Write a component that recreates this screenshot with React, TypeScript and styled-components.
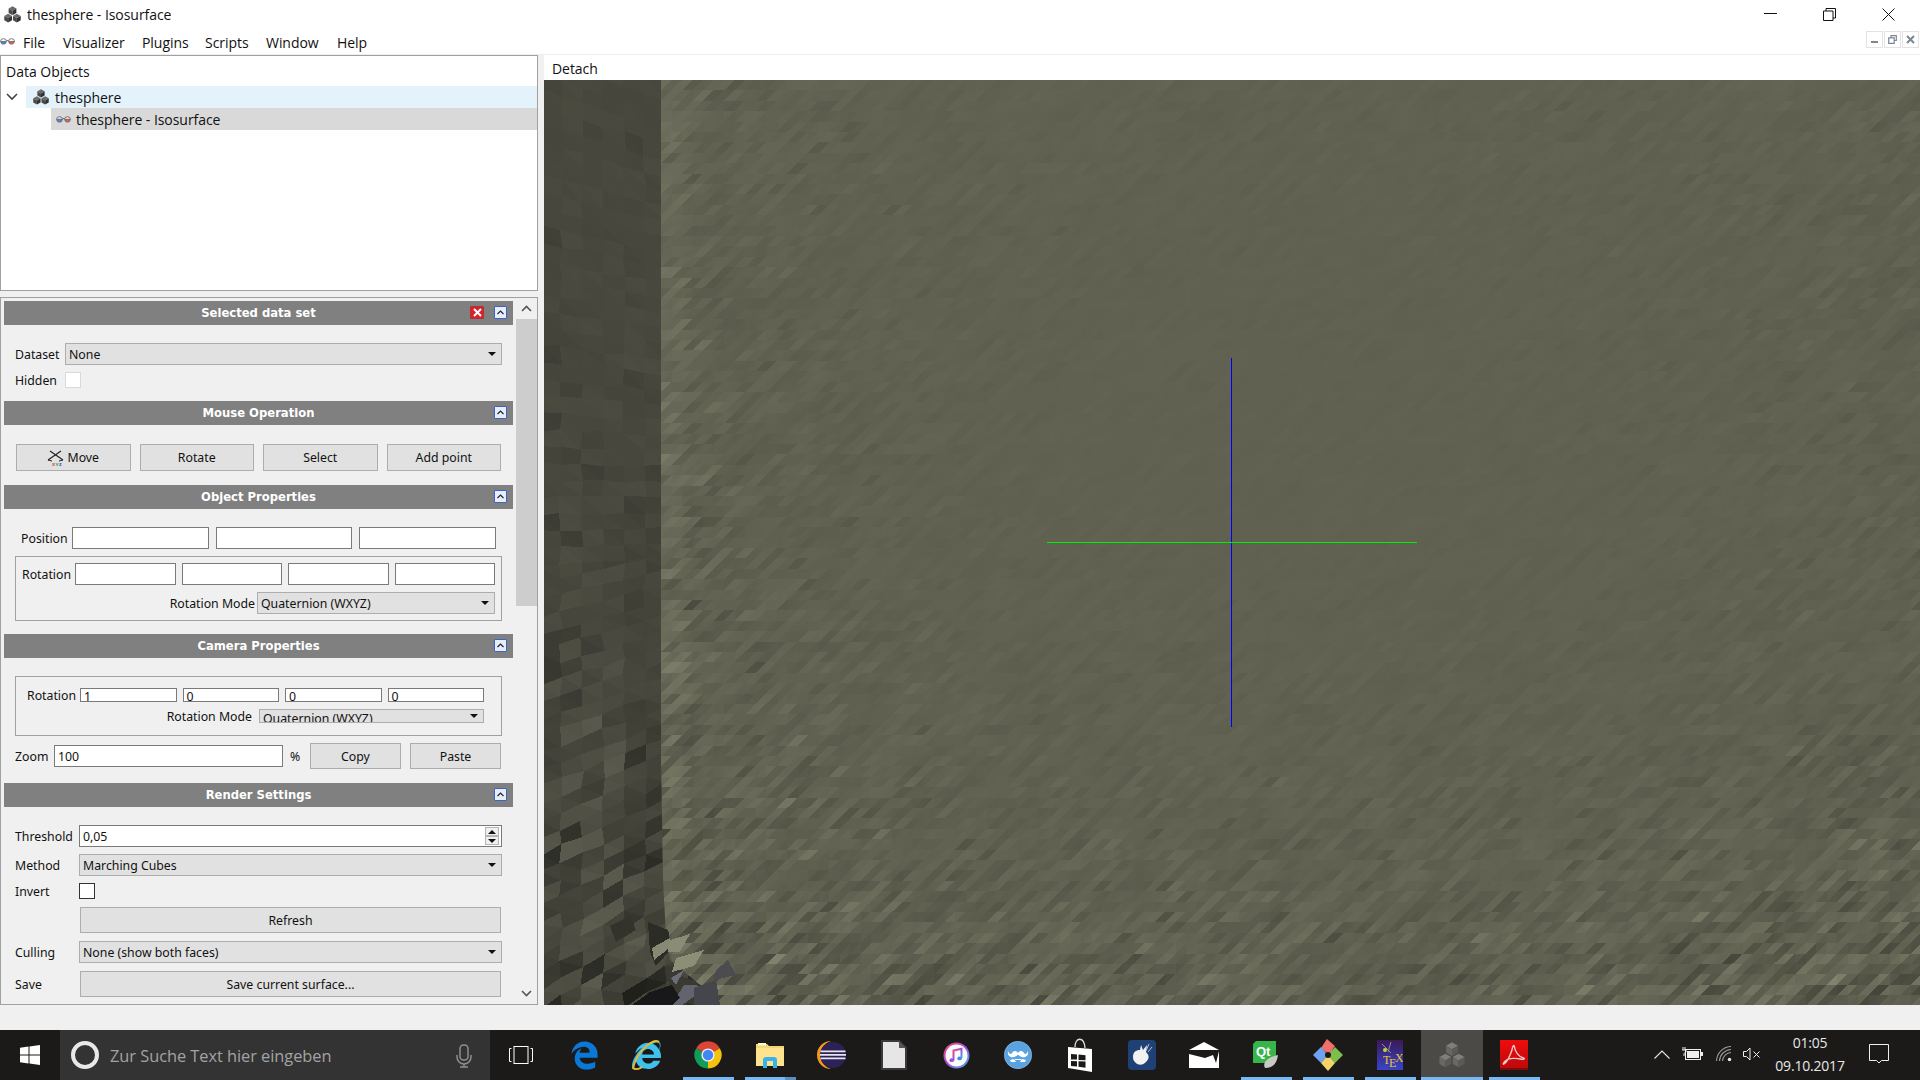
import React, { useMemo } from "react";
import styled, { createGlobalStyle } from "styled-components";
import { FaInternetExplorer } from "react-icons/fa";
import { FaEdgeLegacy } from "react-icons/fa6";

const ui = `"Open Sans", "Noto Sans", sans-serif`;
const dlg = `"Noto Sans", "Liberation Sans", sans-serif`;

const Global = createGlobalStyle`
  html, body { margin: 0; padding: 0; width: 1920px; height: 1080px; overflow: hidden; background: #f0f0f0; }
  * { box-sizing: border-box; }
`;

const Page = styled.div`
  width: 1920px; height: 1080px; display: flex; flex-direction: column; background: #f0f0f0; overflow: hidden;
`;
const TitleBar = styled.header`
  height: 28px; flex: none; background: #fff; display: flex; align-items: center; padding-left: 4px;
`;
const TitleText = styled.span`
  font: 14px ${ui}; color: #111; margin-left: 6px; letter-spacing: -0.05px;
`;
const WindowControls = styled.div`
  margin-left: auto; display: flex; align-items: center; height: 28px; padding-right: 2px;
`;
const WindowControl = styled.div`
  width: 59px; display: flex; justify-content: center; align-items: center;
`;
const MenuBar = styled.nav`
  height: 27px; flex: none; background: #fff; display: flex; align-items: center; border-bottom: 1px solid #eee;
`;
const MenuItem = styled.span<{ $w: number }>`
  font: 14px ${ui}; color: #111; width: ${(p) => p.$w}px; letter-spacing: -0.05px; padding-top: 3px;
`;
const MenuIcon = styled.div`
  width: 23px; padding-top: 1px; display: flex;
`;
const MdiButtons = styled.div`
  margin-left: auto; display: flex; gap: 1px; padding-right: 1px; padding-bottom: 3px;
`;
const MdiButton = styled.div`
  width: 17px; height: 17px; border: 1px solid #e3e3e3; background: #fff; display: flex; align-items: center; justify-content: center;
`;
const Body = styled.main`
  flex: 1; min-height: 0; display: flex; gap: 6px; align-items: flex-start;
`;
const LeftColumn = styled.div`
  width: 538px; flex: none; display: flex; flex-direction: column; gap: 6px;
`;
const TreePanel = styled.section`
  height: 236px; background: #fff; border: 1px solid #a0a0a0; display: flex; flex-direction: column;
`;
const TreeHeader = styled.div`
  height: 30px; flex: none; font: 14px ${ui}; color: #111; padding: 6px 0 0 5px; letter-spacing: 0;
`;
const TreeRow = styled.div<{ $indent: number; $bg: string }>`
  height: 22px; flex: none; display: flex; align-items: center; margin-left: ${(p) => p.$indent}px; background: ${(p) => p.$bg};
  font: 14px ${ui}; color: #111; letter-spacing: -0.05px; position: relative;
`;
const TreeChevron = styled.svg`
  position: absolute; left: -20px; top: 7px;
`;
const TreeIcon = styled.div<{ $w: number }>`
  width: ${(p) => p.$w}px; display: flex; justify-content: center; flex: none;
`;
const ControlPanel = styled.section`
  height: 708px; border: 1px solid #a0a0a0; display: flex; overflow: hidden;
`;
const PanelContent = styled.div`
  width: 515px; flex: none; padding: 3px 3px 0;
`;
const Scrollbar = styled.div`
  flex: 1; display: flex; flex-direction: column; background: #f0f0f0;
`;
const ScrollArrow = styled.div`
  height: 21px; flex: none; display: flex; align-items: center; justify-content: center;
`;
const ScrollThumb = styled.div`
  height: 287px; flex: none; background: #cdcdcd;
`;
const ScrollSpacer = styled.div`
  flex: 1;
`;
const SectionHead = styled.div`
  height: 24px; background: #808080; position: relative; display: flex; align-items: center; justify-content: center;
  font: bold 11.6px "DejaVu Sans", ${dlg}; color: #fff;
`;
const HeadButtons = styled.div`
  position: absolute; right: 6px; top: 5px; display: flex; gap: 10px;
`;
const SmallBtn = styled.div<{ $tone: "blue" | "red" }>`
  width: ${(p) => (p.$tone === "red" ? 14 : 13)}px; height: 13px; display: flex; align-items: center; justify-content: center;
  background: ${(p) => (p.$tone === "red" ? "#d8232c" : "#e6edfb")};
  border: 1px solid ${(p) => (p.$tone === "red" ? "#a33" : "#3b62c4")};
  border-radius: 1px;
`;
const SectionBody = styled.div<{ $pt?: number; $pb?: number }>`
  padding: ${(p) => p.$pt ?? 18}px 11px ${(p) => p.$pb ?? 13}px;
  display: flex; flex-direction: column; gap: 7px;
  font: 12.3px/14px ${dlg}; color: #111;
`;
const Label = styled.span`
  position: relative; top: 1px;
`;
const LabelRow = styled.div<{ $label: number }>`
  display: grid; grid-template-columns: ${(p) => p.$label}px 1fr; align-items: center;
`;
const Fields = styled.div<{ $n: number; $gap: number }>`
  display: grid; grid-template-columns: repeat(${(p) => p.$n}, 1fr); column-gap: ${(p) => p.$gap}px;
`;
const Field = styled.div<{ $small?: boolean }>`
  height: ${(p) => (p.$small ? 14 : 22)}px; border: 1px solid #7a7a7a; background: #fff; padding: ${(p) => (p.$small ? 1 : 0)}px 3px 0;
  line-height: ${(p) => (p.$small ? 13 : 21)}px; white-space: nowrap; overflow: hidden; display: flex; align-items: flex-start; position: relative;
`;
const Spin = styled.div`
  position: absolute; right: 2px; top: 1px; width: 14px; height: 18px; display: flex; flex-direction: column;
`;
const SpinPart = styled.div`
  flex: 1; border: 1px solid #b5b5b5; background: #f0f0f0; display: flex; align-items: center; justify-content: center;
`;
const ComboBox = styled.div<{ $small?: boolean }>`
  height: ${(p) => (p.$small ? 14 : 22)}px; border: 1px solid #adadad; background: #e1e1e1; padding: 0 3px;
  line-height: ${(p) => (p.$small ? 17 : 21)}px;
  display: flex; align-items: flex-start; overflow: hidden; position: relative; white-space: nowrap;
`;
const ComboArrow = styled.div<{ $small?: boolean }>`
  position: absolute; right: 5px; top: ${(p) => (p.$small ? 4 : 8)}px; width: 0; height: 0;
  border-left: 4px solid transparent; border-right: 4px solid transparent; border-top: 4px solid #111;
`;
const Check = styled.div<{ $border: string }>`
  width: 16px; height: 16px; background: #fff; border: 1px solid ${(p) => p.$border};
`;
const Button = styled.div<{ $h?: number; $inset?: boolean }>`
  height: ${(p) => p.$h ?? 27}px; border: 1px solid #adadad; background: #e1e1e1; display: flex; align-items: center; justify-content: center; gap: 3px;
  padding-top: 1px;
  ${(p) => (p.$inset ? "margin: 1px 1px;" : "")}
`;
const ButtonRow = styled.div`
  display: grid; grid-template-columns: repeat(4, 1fr); column-gap: 9px; padding: 0 1px;
`;
const PositionRow = styled.div`
  display: grid; grid-template-columns: 51px 1fr; align-items: center; padding: 0 6px;
`;
const GroupBox = styled.div<{ $pad: string; $gap: number }>`
  border: 1px solid #a0a0a0; padding: ${(p) => p.$pad}; display: flex; flex-direction: column; gap: ${(p) => p.$gap}px;
`;
const ModeRow = styled.div<{ $combo: number }>`
  display: flex; justify-content: flex-end; align-items: center; gap: 2px;
  & > :last-child { width: ${(p) => p.$combo}px; }
`;
const ModeLabel = styled(Label)<{ $mr?: number }>`
  margin-right: ${(p) => p.$mr ?? 0}px;
`;
const ZoomRow = styled.div`
  display: flex; align-items: center; padding-right: 1px;
`;
const ZoomLabel = styled(Label)`
  width: 39px; flex: none;
`;
const ZoomField = styled(Field)`
  width: 229px; flex: none;
`;
const Percent = styled(Label)`
  width: 27px; padding-left: 7px; flex: none;
`;
const ZoomButton = styled(Button)`
  width: 91px; flex: none; margin-right: 9px; &:last-child { margin-right: 0; }
`;
const Right = styled.div`
  flex: 1; min-width: 0; height: 950px; display: flex; flex-direction: column; background: #fff;
`;
const DetachBar = styled.div`
  height: 25px; flex: none; background: #fff; font: 14px ${ui}; color: #111; padding: 4px 0 0 8px; letter-spacing: -0.05px;
`;
const ViewSvg = styled.svg`
  display: block; width: 1376px; height: 925px; background: #5f6050;
`;
const Taskbar = styled.footer`
  position: fixed; left: 0; right: 0; bottom: 0; height: 50px; background: #1c1a18; display: flex; align-items: stretch;
`;
const StartButton = styled.div`
  width: 60px; flex: none; display: flex; align-items: center; justify-content: center;
`;
const SearchBox = styled.div`
  width: 430px; flex: none; background: #333; display: flex; align-items: center; padding-left: 11px; position: relative;
`;
const CortanaRing = styled.div`
  width: 28px; height: 28px; border-radius: 50%; border: 4px solid #e8e8e8; flex: none; margin-right: 11px;
`;
const SearchText = styled.span`
  font: 16.4px ${ui}; color: #a3a3a3; letter-spacing: -0.05px;
`;
const MicIcon = styled.div`
  position: absolute; left: 396px; top: 14px;
`;
const TaskViewButton = styled.div`
  width: 63px; flex: none; display: flex; align-items: center; justify-content: center; padding-right: 2px;
`;
const TaskItem = styled.div<{ $on?: boolean; $active?: boolean; $split?: boolean }>`
  width: 62px; flex: none; display: flex; align-items: center; justify-content: center; position: relative;
  background: ${(p) => (p.$active ? "#4c4a47" : "transparent")};
  &::after {
    content: ""; display: ${(p) => (p.$on ? "block" : "none")}; position: absolute; bottom: 0; height: 3px;
    background: ${(p) => (p.$split ? "linear-gradient(90deg, #76b9f8 0 40px, #5a8fc4 40px)" : "#76b9f8")};
    left: ${(p) => (p.$active ? 0 : 6)}px; right: ${(p) => (p.$active ? 0 : 5)}px;
  }
`;
const IeOrbit = styled.svg`
  position: absolute; left: 15px; top: 9px;
`;
const Tray = styled.div`
  margin-left: auto; display: flex; align-items: stretch; padding-right: 17px;
`;
const TrayItem = styled.div<{ $w: number }>`
  width: ${(p) => p.$w}px; flex: none; display: flex; align-items: center; justify-content: center; padding-bottom: 2px;
`;
const Clock = styled.div`
  width: 90px; flex: none; display: flex; flex-direction: column; align-items: center; justify-content: center; gap: 4px;
  font: 14px/19px ${ui}; color: #e8e8e8; letter-spacing: -0.2px; padding-bottom: 2px;
`;

/* ---------- 3D surface mesh ---------- */
function mulberry(a: number) {
  return () => {
    a |= 0; a = (a + 0x6d2b79f5) | 0;
    let t = Math.imul(a ^ (a >>> 15), 1 | a);
    t = (t + Math.imul(t ^ (t >>> 7), 61 | t)) ^ t;
    return ((t ^ (t >>> 14)) >>> 0) / 4294967296;
  };
}
function hash(i: number, j: number) {
  const x = Math.sin(i * 127.1 + j * 311.7) * 43758.5453;
  return x - Math.floor(x);
}
type Buckets = Map<string, string[]>;
function put(b: Buckets, l: number, base: number[], d: string) {
  const q = Math.round(Math.max(0.25, Math.min(1.5, l)) * 96) / 96;
  const key = `rgb(${Math.round(base[0] * q)},${Math.round(base[1] * q)},${Math.round(base[2] * q)})`;
  if (!b.has(key)) b.set(key, []);
  b.get(key)!.push(d);
}
function tri(a: number[], c: number[], e: number[]) {
  return `M${a[0].toFixed(1)} ${a[1].toFixed(1)}L${c[0].toFixed(1)} ${c[1].toFixed(1)}L${e[0].toFixed(1)} ${e[1].toFixed(1)}Z`;
}
function buildRight() {
  const r = mulberry(7);
  const b: Buckets = new Map();
  const base = [96, 97, 81];
  const w = 10.5, h = 10.4;
  for (let j = 0; j < 90; j++) {
    for (let i = 0; i < 132; i++) {
      const x = 117 + (i - 2) * w, y = j * h;
      const dx = (x - 700) / 640, dy = (y - 380) / 545;
      let c = 0.006 + 0.03 * (dx * dx * 0.7 + dy * dy * (dy > 0 ? 2.3 : 0.5));
      c += 0.035 * Math.exp(-(x - 117) / 140) * (0.7 + (y / 925) * 1.6);
      c += 0.09 * Math.exp(-(1376 - x) / 150) * Math.max(0, (y - 620) / 300);
      c += 0.07 * Math.max(0, (y - 800) / 125) * Math.exp(-x / 900);
      const diag = hash(Math.floor(j / 3), i + j) * 2 - 1;
      let n = (r() * 2 - 1) * 0.8 + diag * 0.9;
      if (r() < 0.07) n -= 1.4;
      if (r() < 0.05) n += 1.2;
      const inStrip = x < 128 ? 0.08 : 0;
      const l = 1 + c * n + inStrip;
      const a = [x, y + h], m = [x + w, y], e = [x + 2 * w, y], f = [x + w, y + h];
      put(b, l + (r() - 0.5) * c * 0.5, base, tri(a, m, f));
      put(b, l + (r() - 0.5) * c * 0.5, base, tri(m, e, f));
    }
  }
  return b;
}
function buildLeft() {
  const r = mulberry(23);
  const b: Buckets = new Map();
  const base = [72, 72, 62];
  const w = 21, h = 17;
  const vert = (i: number, j: number) => {
    const y0 = j * h;
    const s = 8 - (y0 / 925) * 16 - (y0 > 560 ? 3 : 0);
    return [i * w - 6 + hash(j, i) * 4, y0 + s * i + hash(i, j) * 4 - 60];
  };
  for (let j = 0; j < 64; j++) {
    for (let i = 0; i < 8; i++) {
      const p = vert(i, j), q = vert(i + 1, j), s = vert(i + 1, j + 1), t = vert(i, j + 1);
      const yy = p[1] / 925;
      const c = 0.03 + Math.pow(Math.max(0, yy), 2.4) * 0.13;
      let n = r() * 2 - 1;
      if (r() < 0.13) n -= 2;
      if (yy > 0.6 && r() < 0.18) n += 1.6;
      const edge = i >= 4 && yy > 0.45 ? -0.07 : 0;
      const l = 1 + c * n + edge - (i < 1 ? 0.02 : 0);
      put(b, l, base, tri(p, q, s));
      put(b, l + (r() - 0.6) * c * 1.2, base, tri(p, s, t));
    }
  }
  return b;
}
function Mesh({ data }: { data: Buckets }) {
  return (
    <g shapeRendering="crispEdges">
      {Array.from(data.entries()).map(([fill, ds]) => (
        <path key={fill} fill={fill} d={ds.join("")} />
      ))}
    </g>
  );
}
function Surface() {
  const right = useMemo(buildRight, []);
  const left = useMemo(buildLeft, []);
  return (
    <ViewSvg viewBox="0 0 1376 925">
      <Mesh data={right} />
      <clipPath id="wall">
        <path d="M0 0H117L117 680L119 800L122 857L126 880L156 905L176 925H0Z" />
      </clipPath>
      <g clipPath="url(#wall)">
        <Mesh data={left} />
      </g>
      <g shapeRendering="crispEdges">
        <polygon fill="#2c2c26" points="104,842 124,850 128,868 112,886 106,872" />
        <polygon fill="#878972" points="108,868 126,858 128,866 110,880" />
        <polygon fill="#33332c" points="66,846 86,836 92,850 72,862" />
        <polygon fill="#8a8c75" points="126,860 146,854 136,872 124,872" />
        <polygon fill="#3a3a33" points="122,890 148,900 170,912 150,925 128,918" />
        <polygon fill="#6c6d78" points="127,898 140,890 132,905" />
        <polygon fill="#62636c" points="140,905 165,906 138,925 128,925" />
        <polygon fill="#45454c" points="150,908 172,900 176,925 150,925" />
        <polygon fill="#4c4c50" points="172,890 184,880 192,895 170,900" />
        <polygon fill="#18181a" points="88,925 106,912 128,905 136,918 128,925" />
        <polygon fill="#8c8e76" points="132,878 160,870 150,886 128,892" />
      </g>
      <g shapeRendering="crispEdges">
        <rect x="687" y="278" width="1" height="369" fill="#0000ff" />
        <rect x="503" y="462" width="370" height="1" fill="#00f000" />
      </g>
    </ViewSvg>
  );
}

/* ---------- Small icons ---------- */
function Cube({ x, y, s, a, b, c }: { x: number; y: number; s: number; a: string; b: string; c: string }) {
  const h = s * 0.87;
  return (
    <g>
      <polygon fill={a} points={`${x},${y - s} ${x + h},${y - s / 2} ${x},${y} ${x - h},${y - s / 2}`} />
      <polygon fill={b} points={`${x - h},${y - s / 2} ${x},${y} ${x},${y + s} ${x - h},${y + s / 2}`} />
      <polygon fill={c} points={`${x + h},${y - s / 2} ${x},${y} ${x},${y + s} ${x + h},${y + s / 2}`} />
    </g>
  );
}
function Cubes({ size, a = "#6b6b6b", b = "#4a4a4a", c = "#333" }: { size: number; a?: string; b?: string; c?: string }) {
  return (
    <svg width={size} height={size} viewBox="0 0 16 16">
      <Cube x={8} y={4.4} s={4.2} a={a} b={b} c={c} />
      <Cube x={3.9} y={11.4} s={4.2} a={a} b={b} c={c} />
      <Cube x={12.1} y={11.4} s={4.2} a={a} b={b} c={c} />
    </svg>
  );
}
function Glasses({ w = 15 }: { w?: number }) {
  return (
    <svg width={w} height={w * 0.55} viewBox="0 0 15 8">
      <path d="M.5 4.500a3 3 0 0 1 6 0zM8.500 4.500a3 3 0 0 1 6 0z" fill="none" stroke="#777" strokeWidth="1" />
      <path d="M.7 4.500a2.800 2.600 0 0 0 5.600 0z" fill="#4f86cc" stroke="#667" strokeWidth=".5" />
      <path d="M8.700 4.500a2.800 2.600 0 0 0 5.600 0z" fill="#d26464" stroke="#766" strokeWidth=".5" />
      <path d="M6.500 3.500h2" stroke="#666" strokeWidth="1" />
    </svg>
  );
}
const Chev = ({ up = true, color = "#555" }: { up?: boolean; color?: string }) => (
  <svg width="11" height="7" viewBox="0 0 11 7">
    <path d={up ? "M1 6L5.5 1.5L10 6" : "M1 1L5.5 5.5L10 1"} fill="none" stroke={color} strokeWidth="1.6" />
  </svg>
);
const MoveIcon = () => (
  <svg width="17" height="16" viewBox="0 0 17 16">
    <path d="M1 10L14 1M3 1L16 10" stroke="#222" strokeWidth="1.2" fill="none" />
    <path d="M1 10l4 1M16 10l-4 1" stroke="#222" strokeWidth="1" />
    <text x="5" y="15.5" fontSize="5.5" fontFamily="Liberation Sans" fontWeight="bold" fill="#d44">x</text>
    <text x="8.5" y="15.5" fontSize="5.5" fontFamily="Liberation Sans" fontWeight="bold" fill="#3a3">y</text>
    <text x="12" y="15.5" fontSize="5.5" fontFamily="Liberation Sans" fontWeight="bold" fill="#44d">z</text>
  </svg>
);
const Chrome = () => (
  <svg width="28" height="28" viewBox="0 0 28 28">
    <path d="M14 14L2.2 7.2A13.6 13.6 0 0 1 25.8 7.2z" fill="#db4437" />
    <path d="M14 14L25.8 7.2A13.6 13.6 0 0 1 14 27.6z" fill="#f4c20d" />
    <path d="M14 14L14 27.6A13.6 13.6 0 0 1 2.2 7.2z" fill="#0f9d58" />
    <circle cx="14" cy="14" r="6.6" fill="#eee" />
    <circle cx="14" cy="14" r="5.2" fill="#4285f4" />
  </svg>
);
const Folder = () => (
  <svg width="28" height="26" viewBox="0 0 28 26">
    <path d="M0 2h11l2 2h15v20H0z" fill="#f3d774" />
    <rect x="0" y="6" width="28" height="18" fill="#fde38e" />
    <rect x="2" y="1" width="8" height="2.5" fill="#fff6c9" />
    <path d="M7 24v-6q0-3 3-3h8q3 0 3 3v6h-4v-5h-6v5z" fill="#38b2e8" />
    <rect x="7" y="23" width="4" height="3" fill="#38b2e8" />
    <rect x="17" y="23" width="4" height="3" fill="#38b2e8" />
  </svg>
);
const Eclipse = () => (
  <svg width="30" height="28" viewBox="0 0 30 28">
    <path d="M14 0a14 14 0 0 0 0 28a14.5 14.5 0 0 1 0-28z" fill="#f39a1e" />
    <circle cx="16" cy="14" r="13" fill="#2c2255" />
    <path d="M3.5 9.5h25v1.8h-25zM3 13h26v1.8H3zM3.5 16.5h25v1.8h-25z" fill="#e8e6f2" />
  </svg>
);
const LibreDoc = () => (
  <svg width="26" height="30" viewBox="0 0 26 30">
    <path d="M1 1h17l7 7v21H1z" fill="#e6e6e6" stroke="#3a3a3a" strokeWidth="2" />
    <path d="M18 1l7 7h-7z" fill="#555" />
  </svg>
);
const ITunes = () => (
  <svg width="27" height="27" viewBox="0 0 27 27">
    <defs>
      <linearGradient id="itg" x1="0" y1="0" x2="1" y2="1">
        <stop offset="0" stopColor="#f34b6d" /><stop offset="0.5" stopColor="#a64de0" /><stop offset="1" stopColor="#3bb8f0" />
      </linearGradient>
    </defs>
    <circle cx="13.5" cy="13.5" r="13" fill="url(#itg)" />
    <circle cx="13.5" cy="13.5" r="11" fill="#fafafa" />
    <path d="M10.5 18V8.5l8-1.8V16" fill="none" stroke="url(#itg)" strokeWidth="2" />
    <ellipse cx="8.8" cy="18.2" rx="2.3" ry="1.9" fill="#a64de0" />
    <ellipse cx="16.6" cy="16.4" rx="2.3" ry="1.9" fill="#3b8de0" />
  </svg>
);
const Moustache = () => (
  <svg width="28" height="28" viewBox="0 0 28 28">
    <circle cx="14" cy="14" r="13.7" fill="#5aa2e0" stroke="#9cc7ea" strokeWidth=".6" />
    <path d="M14 12c2-3 5-2 6 0s3 1 4-2c1 5-3 7-6 6s-3-2-4-2-1 1-4 2-7-1-6-6c1 3 3 4 4 2s4-3 6 0z" fill="#fff" />
    <path d="M6 19l4-1 2 3H7zM22 19l-4-1-2 3h5zM11 18h6v1h-6z" fill="#fff" />
  </svg>
);
const Store = () => (
  <svg width="26" height="34" viewBox="0 0 26 34">
    <path d="M1 9l24 2v23L1 30z" fill="#fff" />
    <path d="M8 9c0-10 9-11 10 1" fill="none" stroke="#ddd" strokeWidth="1.3" />
    <path d="M4 16l6 .5v5H4zM11.5 16.6l7 .6v5l-7-.3zM4 23l6 .2v5.400l-6-.7zM11.5 23.300l7 .2v6.200l-7-.9z" fill="#1c1a18" />
  </svg>
);
const FinchApp = () => (
  <svg width="28" height="32" viewBox="0 0 28 32">
    <rect x="0" y="1" width="28" height="30" rx="4" fill="#1f4176" />
    <path d="M5 18c0-6 4-7 7-7l1-5 2 5 4-5-1 7c3 3 4 6 0 10s-8 3-10 1-3-3-3-6z" fill="#f2f2f2" />
    <path d="M21 5l-3 7M24 8l-4 5" stroke="#b9c6da" strokeWidth="1" />
  </svg>
);
const Mail = () => (
  <svg width="30" height="26" viewBox="0 0 30 26">
    <path d="M0 8L15 0L30 8z" fill="#fff" />
    <path d="M0 8h30L24 12 16 15.500 0 11.500z" fill="#1c1a18" />
    <path d="M0 12L16 16L24 13L27 21L30 9V26H0z" fill="#fff" />
  </svg>
);
const QtLogo = () => (
  <svg width="26" height="28" viewBox="0 0 26 28">
    <path d="M3 0H23V17L18 22H0V3z" fill="#36b54a" />
    <text x="3" y="15" fontFamily="Liberation Sans" fontWeight="bold" fontSize="13" fill="#fff">Qt</text>
    <path d="M12 27c-3-5 2-11 13-13-1 7-4 13-13 13z" fill="#c9c9c4" />
  </svg>
);
const GitDiamond = () => (
  <svg width="30" height="34" viewBox="0 0 30 34">
    <path d="M15 1l7 8-7 8-7-8z" transform="rotate(-8 15 9)" fill="#f0706a" />
    <path d="M22 9l8 8-8 8-7-8z" fill="#7cbf4a" />
    <path d="M8 9l7 8-7 8-8-8z" fill="#6ea3f2" />
    <path d="M15 17l7 8-7 8-7-8z" fill="#f3d36b" />
    <circle cx="15" cy="17" r="3" fill="#1c1a18" />
  </svg>
);
const TexLogo = () => (
  <svg width="26" height="30" viewBox="0 0 26 30">
    <defs>
      <linearGradient id="txg" x1="0" y1="0" x2="0" y2="1">
        <stop offset="0" stopColor="#3a1a55" /><stop offset="1" stopColor="#3a44c8" />
      </linearGradient>
    </defs>
    <rect width="26" height="30" fill="url(#txg)" />
    <path d="M5 4l9 9M14 2L11 12" stroke="#8f8f9f" strokeWidth="1" />
    <circle cx="8" cy="10" r="2" fill="#b7d832" />
    <text x="6" y="24" fontFamily="Liberation Serif" fontSize="12" fill="#eac43c">T</text>
    <text x="12" y="27" fontFamily="Liberation Serif" fontSize="12" fill="#eac43c">E</text>
    <text x="18" y="22" fontFamily="Liberation Serif" fontSize="12" fill="#eac43c">X</text>
  </svg>
);
const Acrobat = () => (
  <svg width="28" height="30" viewBox="0 0 28 30">
    <defs>
      <linearGradient id="acg" x1="0" y1="0" x2="0" y2="1">
        <stop offset="0" stopColor="#f00c0c" /><stop offset="1" stopColor="#b80a0a" />
      </linearGradient>
    </defs>
    <rect width="28" height="30" fill="url(#acg)" />
    <rect y="28" width="28" height="2" fill="#7d0a0a" />
    <path d="M4 24c3-2 6-8 8-14 .5-4 2-6 2.500-3 .3 4 4 10 9 11 2 .5 0 2-3 1-4-1-11-1-14 1-3 2-4 5-2.500 4z" fill="none" stroke="#f2c8c8" strokeWidth="1.4" />
  </svg>
);

function Section({ title, close }: { title: string; close?: boolean }) {
  return (
    <SectionHead>
      {title}
      <HeadButtons>
        {close && (
          <SmallBtn $tone="red">
            <svg width="9" height="9" viewBox="0 0 9 9"><path d="M1 1l7 7M8 1L1 8" stroke="#fff" strokeWidth="2" /></svg>
          </SmallBtn>
        )}
        <SmallBtn $tone="blue">
          <svg width="7" height="5" viewBox="0 0 7 5"><path d="M.5 4L3.500 1L6.500 4" fill="none" stroke="#223" strokeWidth="1.2" /></svg>
        </SmallBtn>
      </HeadButtons>
    </SectionHead>
  );
}

export default function App() {
  return (
    <Page>
      <Global />
      <TitleBar>
        <Cubes size={17} />
        <TitleText>thesphere - Isosurface</TitleText>
        <WindowControls>
          <WindowControl>
            <svg width="13" height="2" viewBox="0 0 13 2"><rect width="13" height="1" fill="#111" /></svg>
          </WindowControl>
          <WindowControl>
            <svg width="13" height="13" viewBox="0 0 13 13"><path d="M3 3V.5h9.500V10H10M.5 3h9.500v9.500H.5z" fill="none" stroke="#111" /></svg>
          </WindowControl>
          <WindowControl>
            <svg width="13" height="13" viewBox="0 0 13 13"><path d="M.5.5l12 12M12.500.5l-12 12" fill="none" stroke="#111" /></svg>
          </WindowControl>
        </WindowControls>
      </TitleBar>
      <MenuBar>
        <MenuIcon><Glasses w={15} /></MenuIcon>
        <MenuItem $w={40}>File</MenuItem>
        <MenuItem $w={79}>Visualizer</MenuItem>
        <MenuItem $w={63}>Plugins</MenuItem>
        <MenuItem $w={61}>Scripts</MenuItem>
        <MenuItem $w={71}>Window</MenuItem>
        <MenuItem $w={40}>Help</MenuItem>
        <MdiButtons>
          <MdiButton><svg width="9" height="9" viewBox="0 0 9 9"><rect x="1" y="6" width="7" height="2" fill="#7b8794" /></svg></MdiButton>
          <MdiButton><svg width="9" height="9" viewBox="0 0 9 9"><path d="M3 2.500V.7h5.300v4.800H6.500M.7 2.800h5.500v5.500H.7z" fill="none" stroke="#7b8794" strokeWidth="1.2" /></svg></MdiButton>
          <MdiButton><svg width="9" height="9" viewBox="0 0 9 9"><path d="M1 1l7 7M8 1L1 8" stroke="#7b8794" strokeWidth="2" /></svg></MdiButton>
        </MdiButtons>
      </MenuBar>
      <Body>
        <LeftColumn>
          <TreePanel>
            <TreeHeader>Data Objects</TreeHeader>
            <TreeRow $indent={25} $bg="#e4f2fc">
              <TreeChevron width="12" height="8" viewBox="0 0 12 8"><path d="M1 1l5 5 5-5" fill="none" stroke="#444" strokeWidth="1.6" /></TreeChevron>
              <TreeIcon $w={29}><Cubes size={16} /></TreeIcon>
              thesphere
            </TreeRow>
            <TreeRow $indent={50} $bg="#d9d9d9">
              <TreeIcon $w={25}><Glasses w={15} /></TreeIcon>
              thesphere - Isosurface
            </TreeRow>
          </TreePanel>
          <ControlPanel>
            <PanelContent>
              <Section title="Selected data set" close />
              <SectionBody>
                <LabelRow $label={50}>
                  <Label>Dataset</Label>
                  <ComboBox>None<ComboArrow /></ComboBox>
                </LabelRow>
                <LabelRow $label={50}>
                  <Label>Hidden</Label>
                  <Check $border="#d9d9d9" />
                </LabelRow>
              </SectionBody>

              <Section title="Mouse Operation" />
              <SectionBody $pt={19} $pb={14}>
                <ButtonRow>
                  <Button><MoveIcon />Move</Button>
                  <Button>Rotate</Button>
                  <Button>Select</Button>
                  <Button>Add point</Button>
                </ButtonRow>
              </SectionBody>

              <Section title="Object Properties" />
              <SectionBody>
                <PositionRow>
                  <Label>Position</Label>
                  <Fields $n={3} $gap={7}><Field /><Field /><Field /></Fields>
                </PositionRow>
                <GroupBox $pad="6px 6px 6px 6px" $gap={7}>
                  <LabelRow $label={53}>
                    <Label>Rotation</Label>
                    <Fields $n={4} $gap={6}><Field /><Field /><Field /><Field /></Fields>
                  </LabelRow>
                  <ModeRow $combo={238}>
                    <Label>Rotation Mode</Label>
                    <ComboBox>Quaternion (WXYZ)<ComboArrow /></ComboBox>
                  </ModeRow>
                </GroupBox>
              </SectionBody>

              <Section title="Camera Properties" />
              <SectionBody $pb={14}>
                <GroupBox $pad="11px 17px 12px 11px" $gap={7}>
                  <LabelRow $label={53}>
                    <Label>Rotation</Label>
                    <Fields $n={4} $gap={6}>
                      <Field $small>1</Field><Field $small>0</Field><Field $small>0</Field><Field $small>0</Field>
                    </Fields>
                  </LabelRow>
                  <ModeRow $combo={225}>
                    <ModeLabel $mr={5}>Rotation Mode</ModeLabel>
                    <ComboBox $small>Quaternion (WXYZ)<ComboArrow $small /></ComboBox>
                  </ModeRow>
                </GroupBox>
                <ZoomRow>
                  <ZoomLabel>Zoom</ZoomLabel>
                  <ZoomField>100</ZoomField>
                  <Percent>%</Percent>
                  <ZoomButton $h={26}>Copy</ZoomButton>
                  <ZoomButton $h={26}>Paste</ZoomButton>
                </ZoomRow>
              </SectionBody>

              <Section title="Render Settings" />
              <SectionBody $pb={7}>
                <LabelRow $label={64}>
                  <Label>Threshold</Label>
                  <Field>0,05
                    <Spin>
                      <SpinPart><svg width="8" height="4" viewBox="0 0 8 4"><path d="M0 4L4 0L8 4z" fill="#111" /></svg></SpinPart>
                      <SpinPart><svg width="8" height="4" viewBox="0 0 8 4"><path d="M0 0L4 4L8 0z" fill="#111" /></svg></SpinPart>
                    </Spin>
                  </Field>
                </LabelRow>
                <LabelRow $label={64}>
                  <Label>Method</Label>
                  <ComboBox>Marching Cubes<ComboArrow /></ComboBox>
                </LabelRow>
                <LabelRow $label={64}>
                  <Label>Invert</Label>
                  <Check $border="#333" />
                </LabelRow>
                <LabelRow $label={64}>
                  <span />
                  <Button $inset $h={26}>Refresh</Button>
                </LabelRow>
                <LabelRow $label={64}>
                  <Label>Culling</Label>
                  <ComboBox>None (show both faces)<ComboArrow /></ComboBox>
                </LabelRow>
                <LabelRow $label={64}>
                  <Label>Save</Label>
                  <Button $inset $h={26}>Save current surface...</Button>
                </LabelRow>
              </SectionBody>
            </PanelContent>
            <Scrollbar>
              <ScrollArrow><Chev up /></ScrollArrow>
              <ScrollThumb />
              <ScrollSpacer />
              <ScrollArrow><Chev up={false} /></ScrollArrow>
            </Scrollbar>
          </ControlPanel>
        </LeftColumn>
        <Right>
          <DetachBar>Detach</DetachBar>
          <Surface />
        </Right>
      </Body>
      <Taskbar>
        <StartButton>
          <svg width="20" height="20" viewBox="0 0 20 20"><path d="M0 2.800L8.500 1.600V9.500H0zM9.500 1.500L20 0V9.500H9.500zM0 10.500H8.500V18.400L0 17.200zM9.500 10.500H20V20L9.500 18.500z" fill="#fff" /></svg>
        </StartButton>
        <SearchBox>
          <CortanaRing />
          <SearchText>Zur Suche Text hier eingeben</SearchText>
          <MicIcon>
            <svg width="16" height="24" viewBox="0 0 16 24"><rect x="4" y="1" width="8" height="15" rx="3.500" fill="none" stroke="#8f8f8f" strokeWidth="1.5" /><path d="M1 11v2a7 7 0 0 0 14 0v-2M8 20v3M4 23h8" fill="none" stroke="#8f8f8f" strokeWidth="1.5" /></svg>
          </MicIcon>
        </SearchBox>
        <TaskViewButton>
          <svg width="24" height="18" viewBox="0 0 24 18"><rect x="5" y=".5" width="14" height="17" fill="none" stroke="#fff" /><path d="M2.500 2.500H.5v13h2M21.500 2.500h2v13h-2" fill="none" stroke="#fff" /></svg>
        </TaskViewButton>
        <TaskItem><FaEdgeLegacy size={29} color="#0a78d7" /></TaskItem>
        <TaskItem>
          <FaInternetExplorer size={29} color="#3fc1ee" />
          <IeOrbit width="32" height="32" viewBox="0 0 32 32">
            <path d="M29 3C24 -1 8 10 3 29c3 2 6 1 9-1" fill="none" stroke="#eab92e" strokeWidth="1.8" />
          </IeOrbit>
        </TaskItem>
        <TaskItem $on><Chrome /></TaskItem>
        <TaskItem $on $split><Folder /></TaskItem>
        <TaskItem><Eclipse /></TaskItem>
        <TaskItem><LibreDoc /></TaskItem>
        <TaskItem><ITunes /></TaskItem>
        <TaskItem><Moustache /></TaskItem>
        <TaskItem><Store /></TaskItem>
        <TaskItem><FinchApp /></TaskItem>
        <TaskItem><Mail /></TaskItem>
        <TaskItem $on><QtLogo /></TaskItem>
        <TaskItem $on><GitDiamond /></TaskItem>
        <TaskItem $on><TexLogo /></TaskItem>
        <TaskItem $on $active><Cubes size={26} a="#807e7b" b="#6a6866" c="#5c5a58" /></TaskItem>
        <TaskItem $on><Acrobat /></TaskItem>
        <Tray>
          <TrayItem $w={31}><svg width="16" height="9" viewBox="0 0 16 9"><path d="M.5 8.500L8 1l7.500 7.500" fill="none" stroke="#e8e8e8" strokeWidth="1.1" /></svg></TrayItem>
          <TrayItem $w={31}><svg width="21" height="14" viewBox="0 0 21 14"><rect x="3.500" y="2.500" width="15" height="10" fill="none" stroke="#eee" /><rect x="5" y="4" width="12" height="7" fill="#eee" /><rect x="19" y="5" width="2" height="4" fill="#eee" /><path d="M1 0v3M3 0v3M0 3h4v2L2 6.500V9" stroke="#eee" fill="none" /></svg></TrayItem>
          <TrayItem $w={31}><svg width="16" height="16" viewBox="0 0 16 16"><path d="M.5 15A15 15 0 0 1 15 .5M3.500 15A12 12 0 0 1 15 3.500M6.500 15A9 9 0 0 1 15 6.500" fill="none" stroke="#9a9a9a" strokeWidth="1.100" /><circle cx="13.500" cy="13.500" r="1.700" fill="#eee" /></svg></TrayItem>
          <TrayItem $w={26}><svg width="18" height="14" viewBox="0 0 18 14"><path d="M.5 4.500h3l3.500-3.500v12l-3.500-3.500h-3z" fill="none" stroke="#eee" /><path d="M10.500 4.500l6 6M16.500 4.500l-6 6" stroke="#eee" /></svg></TrayItem>
          <Clock><span>01:05</span><span>09.10.2017</span></Clock>
          <TrayItem $w={48}><svg width="20" height="20" viewBox="0 0 20 20"><path d="M.5.500h19v16h-7l-2.500 2.500-2.500-2.500h-7z" fill="none" stroke="#eee" /></svg></TrayItem>
        </Tray>
      </Taskbar>
    </Page>
  );
}
